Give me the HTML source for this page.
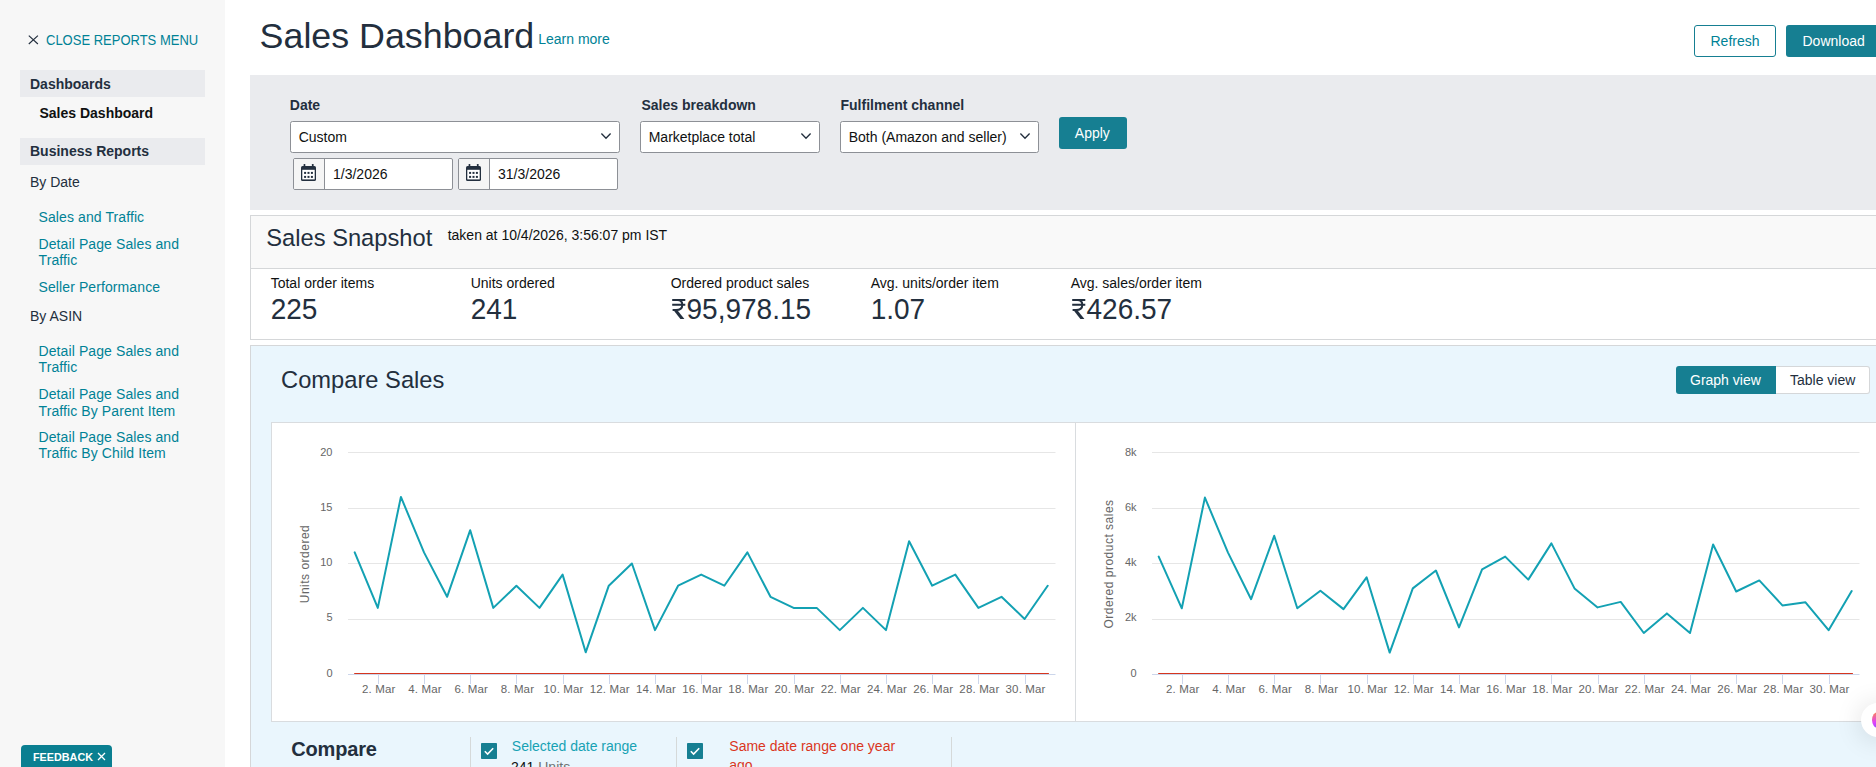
<!DOCTYPE html>
<html><head><meta charset="utf-8"><title>Sales Dashboard</title>
<style>
html,body{margin:0;padding:0;width:1876px;height:767px;overflow:hidden;background:#fff}
body{position:relative;font-family:"Liberation Sans",sans-serif}
.t{position:absolute;white-space:nowrap;line-height:1}
.r{position:absolute}
.cl{color:#666666}
</style></head><body>
<div class="r" style="left:0px;top:0px;width:225px;height:767px;background:#f7f7f7"></div>
<svg class="r" style="left:27.5px;top:35px" width="11" height="11" viewBox="0 0 11 11"><path d="M0.8 0.6L9.9 9M9.9 0.6L0.8 9" stroke="#232f3e" stroke-width="1.15"/></svg>
<div class="t" style="left:46.0px;top:34.00px;font-size:13px;color:#008296;transform:scaleY(1.08);transform-origin:0 11px;">CLOSE REPORTS MENU</div>
<div class="r" style="left:20px;top:70px;width:185px;height:27px;background:#eaebee"></div>
<div class="t" style="left:30.0px;top:77.15px;font-size:14px;color:#232f3e;font-weight:bold;">Dashboards</div>
<div class="t" style="left:39.5px;top:106.15px;font-size:14px;color:#0f1111;font-weight:bold;">Sales Dashboard</div>
<div class="r" style="left:20px;top:138px;width:185px;height:27px;background:#eaebee"></div>
<div class="t" style="left:30.0px;top:143.95px;font-size:14px;color:#232f3e;font-weight:bold;">Business Reports</div>
<div class="t" style="left:30.0px;top:175.15px;font-size:14px;color:#232f3e;">By Date</div>
<div class="t" style="left:38.5px;top:210.15px;font-size:14px;color:#008296;letter-spacing:0.1px;">Sales and Traffic</div>
<div class="t" style="left:38.5px;top:237.45px;font-size:14px;color:#008296;letter-spacing:0.1px;">Detail Page Sales and</div>
<div class="t" style="left:38.5px;top:253.15px;font-size:14px;color:#008296;letter-spacing:0.1px;">Traffic</div>
<div class="t" style="left:38.5px;top:280.15px;font-size:14px;color:#008296;letter-spacing:0.1px;">Seller Performance</div>
<div class="t" style="left:30.0px;top:309.15px;font-size:14px;color:#232f3e;">By ASIN</div>
<div class="t" style="left:38.5px;top:344.45px;font-size:14px;color:#008296;letter-spacing:0.1px;">Detail Page Sales and</div>
<div class="t" style="left:38.5px;top:360.15px;font-size:14px;color:#008296;letter-spacing:0.1px;">Traffic</div>
<div class="t" style="left:38.5px;top:387.45px;font-size:14px;color:#008296;letter-spacing:0.1px;">Detail Page Sales and</div>
<div class="t" style="left:38.5px;top:403.85px;font-size:14px;color:#008296;letter-spacing:0.1px;">Traffic By Parent Item</div>
<div class="t" style="left:38.5px;top:430.45px;font-size:14px;color:#008296;letter-spacing:0.1px;">Detail Page Sales and</div>
<div class="t" style="left:38.5px;top:446.15px;font-size:14px;color:#008296;letter-spacing:0.1px;">Traffic By Child Item</div>
<div class="r" style="left:21px;top:745px;width:91px;height:30px;background:#00838f;border-radius:4px 4px 0 0;background:#0a7f91"></div>
<div class="t" style="left:33.0px;top:751.86px;font-size:10.8px;color:#ffffff;font-weight:bold;">FEEDBACK</div>
<svg class="r" style="left:97px;top:752px" width="9" height="9" viewBox="0 0 9 9"><path d="M1 1L8 8M8 1L1 8" stroke="#fff" stroke-width="1.3"/></svg>
<div class="t" style="left:259.6px;top:18.70px;font-size:35.8px;color:#232f3e;">Sales Dashboard</div>
<div class="t" style="left:538.2px;top:32.15px;font-size:14px;color:#008296;">Learn more</div>
<div class="r" style="left:1694px;top:25px;width:82px;height:32px;border:1px solid #167f92;border-radius:3px;box-sizing:border-box;background:#fff"></div>
<div class="t" style="left:1710.5px;top:34.15px;font-size:14px;color:#008296;">Refresh</div>
<div class="r" style="left:1786px;top:25px;width:104px;height:32px;background:#167f92;border-radius:3px"></div>
<div class="t" style="left:1802.5px;top:34.15px;font-size:14px;color:#ffffff;">Download</div>
<div class="r" style="left:250px;top:75px;width:1626px;height:135px;background:#eaebee"></div>
<div class="t" style="left:289.8px;top:98.15px;font-size:14px;color:#232f3e;font-weight:bold;">Date</div>
<div class="t" style="left:641.5px;top:98.15px;font-size:14px;color:#232f3e;font-weight:bold;">Sales breakdown</div>
<div class="t" style="left:840.5px;top:98.15px;font-size:14px;color:#232f3e;font-weight:bold;">Fulfilment channel</div>
<div class="r" style="left:290px;top:121px;width:330px;height:32px;background:#fff;border:1px solid #8d9096;border-radius:2.5px;box-sizing:border-box"></div>
<div class="t" style="left:298.7px;top:130.15px;font-size:14px;color:#0f1111;">Custom</div>
<svg class="r" style="left:600px;top:131px" width="12" height="9" viewBox="0 0 12 9"><path d="M1.4 2.6L6 7.2L10.6 2.6" fill="none" stroke="#232f3e" stroke-width="1.35"/></svg>
<div class="r" style="left:640px;top:121px;width:180px;height:32px;background:#fff;border:1px solid #8d9096;border-radius:2.5px;box-sizing:border-box"></div>
<div class="t" style="left:648.7px;top:130.15px;font-size:14px;color:#0f1111;">Marketplace total</div>
<svg class="r" style="left:800px;top:131px" width="12" height="9" viewBox="0 0 12 9"><path d="M1.4 2.6L6 7.2L10.6 2.6" fill="none" stroke="#232f3e" stroke-width="1.35"/></svg>
<div class="r" style="left:840px;top:121px;width:199px;height:32px;background:#fff;border:1px solid #8d9096;border-radius:2.5px;box-sizing:border-box"></div>
<div class="t" style="left:848.7px;top:130.15px;font-size:14px;color:#0f1111;">Both (Amazon and seller)</div>
<svg class="r" style="left:1019px;top:131px" width="12" height="9" viewBox="0 0 12 9"><path d="M1.4 2.6L6 7.2L10.6 2.6" fill="none" stroke="#232f3e" stroke-width="1.35"/></svg>
<div class="r" style="left:293px;top:158px;width:160px;height:32px;background:#fff;border:1px solid #8d9096;border-radius:2px;box-sizing:border-box"></div>
<div class="r" style="left:294px;top:159px;width:30px;height:30px;background:#f5f5f5;border-right:1px solid #8d9096;border-radius:1px 0 0 1px"></div>
<svg class="r" style="left:301px;top:164px" width="16" height="17" viewBox="0 0 16 17"><rect x="0" y="2" width="15" height="15" rx="1.6" fill="#232f3e"/><rect x="1.3" y="5.8" width="12.4" height="9.6" fill="#fff"/><rect x="2.6" y="0" width="1.7" height="3" rx="0.5" fill="#232f3e"/><rect x="10.9" y="0" width="1.7" height="3" rx="0.5" fill="#232f3e"/><g fill="#232f3e"><rect x="3.1" y="7.9" width="2" height="2"/><rect x="6.5" y="7.9" width="2" height="2"/><rect x="9.9" y="7.9" width="2" height="2"/><rect x="3.1" y="11.9" width="2" height="2"/><rect x="6.5" y="11.9" width="2" height="2"/><rect x="9.9" y="11.9" width="2" height="2"/></g></svg>
<div class="t" style="left:333.0px;top:167.15px;font-size:14px;color:#0f1111;">1/3/2026</div>
<div class="r" style="left:458px;top:158px;width:160px;height:32px;background:#fff;border:1px solid #8d9096;border-radius:2px;box-sizing:border-box"></div>
<div class="r" style="left:459px;top:159px;width:30px;height:30px;background:#f5f5f5;border-right:1px solid #8d9096;border-radius:1px 0 0 1px"></div>
<svg class="r" style="left:466px;top:164px" width="16" height="17" viewBox="0 0 16 17"><rect x="0" y="2" width="15" height="15" rx="1.6" fill="#232f3e"/><rect x="1.3" y="5.8" width="12.4" height="9.6" fill="#fff"/><rect x="2.6" y="0" width="1.7" height="3" rx="0.5" fill="#232f3e"/><rect x="10.9" y="0" width="1.7" height="3" rx="0.5" fill="#232f3e"/><g fill="#232f3e"><rect x="3.1" y="7.9" width="2" height="2"/><rect x="6.5" y="7.9" width="2" height="2"/><rect x="9.9" y="7.9" width="2" height="2"/><rect x="3.1" y="11.9" width="2" height="2"/><rect x="6.5" y="11.9" width="2" height="2"/><rect x="9.9" y="11.9" width="2" height="2"/></g></svg>
<div class="t" style="left:498.0px;top:167.15px;font-size:14px;color:#0f1111;">31/3/2026</div>
<div class="r" style="left:1059px;top:117px;width:68px;height:32px;background:#167f92;border-radius:3px"></div>
<div class="t" style="left:1074.8px;top:126.35px;font-size:14px;color:#ffffff;">Apply</div>
<div class="r" style="left:250px;top:215px;width:1650px;height:125px;border:1px solid #d5d7d9;box-sizing:border-box;background:#fff"></div>
<div class="r" style="left:251px;top:216px;width:1649px;height:52px;background:#f9f9f9;border-bottom:1px solid #d5d7d9"></div>
<div class="t" style="left:266.3px;top:226.79px;font-size:23.7px;color:#232f3e;">Sales Snapshot</div>
<div class="t" style="left:447.7px;top:228.15px;font-size:14px;color:#0f1111;">taken at 10/4/2026, 3:56:07 pm IST</div>
<div class="t" style="left:270.7px;top:276.15px;font-size:14px;color:#0f1111;">Total order items</div>
<div class="t" style="left:270.7px;top:295.90px;font-size:28px;color:#232f3e;transform:scaleY(1.045);transform-origin:0 23.7px;">225</div>
<div class="t" style="left:470.7px;top:276.15px;font-size:14px;color:#0f1111;">Units ordered</div>
<div class="t" style="left:470.7px;top:295.90px;font-size:28px;color:#232f3e;transform:scaleY(1.045);transform-origin:0 23.7px;">241</div>
<div class="t" style="left:670.7px;top:276.15px;font-size:14px;color:#0f1111;">Ordered product sales</div>
<svg class="r" style="left:672px;top:299px" width="15" height="21" viewBox="0 0 15 21"><g fill="none" stroke="#232f3e" stroke-width="2"><path d="M0.2 1.05H13.3M0.2 5.85H13.3"/><path d="M5.5 1.05C9.3 1.05 10.3 3.3 10.3 5.9C10.3 9.2 7.8 10.95 4 10.95H0.6"/></g><path d="M0.8 10.3H4.6L12.4 19.9H8.4Z" fill="#232f3e"/></svg>
<div class="t" style="left:686.5px;top:295.90px;font-size:28px;color:#232f3e;transform:scaleY(1.045);transform-origin:0 23.7px;">95,978.15</div>
<div class="t" style="left:870.7px;top:276.15px;font-size:14px;color:#0f1111;">Avg. units/order item</div>
<div class="t" style="left:870.7px;top:295.90px;font-size:28px;color:#232f3e;transform:scaleY(1.045);transform-origin:0 23.7px;">1.07</div>
<div class="t" style="left:1070.7px;top:276.15px;font-size:14px;color:#0f1111;">Avg. sales/order item</div>
<svg class="r" style="left:1072px;top:299px" width="15" height="21" viewBox="0 0 15 21"><g fill="none" stroke="#232f3e" stroke-width="2"><path d="M0.2 1.05H13.3M0.2 5.85H13.3"/><path d="M5.5 1.05C9.3 1.05 10.3 3.3 10.3 5.9C10.3 9.2 7.8 10.95 4 10.95H0.6"/></g><path d="M0.8 10.3H4.6L12.4 19.9H8.4Z" fill="#232f3e"/></svg>
<div class="t" style="left:1086.5px;top:295.90px;font-size:28px;color:#232f3e;transform:scaleY(1.045);transform-origin:0 23.7px;">426.57</div>
<div class="r" style="left:250px;top:345px;width:1650px;height:422px;border:1px solid #d5d7d9;border-bottom:none;box-sizing:border-box;background:#eaf6fd"></div>
<div class="t" style="left:281.1px;top:368.94px;font-size:23.7px;color:#232f3e;">Compare Sales</div>
<div class="r" style="left:1676px;top:366px;width:100px;height:28px;background:#167f92;border-radius:3px 0 0 3px"></div>
<div class="t" style="left:1690.0px;top:372.65px;font-size:14px;color:#ffffff;">Graph view</div>
<div class="r" style="left:1776px;top:366px;width:94px;height:28px;background:#fff;border:1px solid #d5d7d9;border-left:none;border-radius:0 3px 3px 0;box-sizing:border-box"></div>
<div class="t" style="left:1790.0px;top:372.65px;font-size:14px;color:#232f3e;">Table view</div>
<div class="r" style="left:271px;top:422px;width:1629px;height:300px;background:#fff;border:1px solid #d9dcdf;box-sizing:border-box"></div>
<div class="r" style="left:1075px;top:422px;width:1px;height:300px;background:#d9dcdf"></div>
<svg class="r" style="left:0;top:0" width="1876" height="767"><path d="M348 452.5H1055.5" stroke="#e6e6e6" stroke-width="1"/><path d="M348 508.5H1055.5" stroke="#e6e6e6" stroke-width="1"/><path d="M348 563.5H1055.5" stroke="#e6e6e6" stroke-width="1"/><path d="M348 619.5H1055.5" stroke="#e6e6e6" stroke-width="1"/><path d="M354.2 674H1048.9" stroke="#d5361f" stroke-width="2"/><path d="M348 674.5H1055.5" stroke="#ccd6eb" stroke-width="1"/><path d="M378.5 674V684" stroke="#ccd6eb" stroke-width="1"/><path d="M424.5 674V684" stroke="#ccd6eb" stroke-width="1"/><path d="M470.5 674V684" stroke="#ccd6eb" stroke-width="1"/><path d="M516.5 674V684" stroke="#ccd6eb" stroke-width="1"/><path d="M563.5 674V684" stroke="#ccd6eb" stroke-width="1"/><path d="M609.5 674V684" stroke="#ccd6eb" stroke-width="1"/><path d="M655.5 674V684" stroke="#ccd6eb" stroke-width="1"/><path d="M701.5 674V684" stroke="#ccd6eb" stroke-width="1"/><path d="M747.5 674V684" stroke="#ccd6eb" stroke-width="1"/><path d="M794.5 674V684" stroke="#ccd6eb" stroke-width="1"/><path d="M840.5 674V684" stroke="#ccd6eb" stroke-width="1"/><path d="M886.5 674V684" stroke="#ccd6eb" stroke-width="1"/><path d="M932.5 674V684" stroke="#ccd6eb" stroke-width="1"/><path d="M978.5 674V684" stroke="#ccd6eb" stroke-width="1"/><path d="M1025.5 674V684" stroke="#ccd6eb" stroke-width="1"/><path d="M354.7 552.4 L377.8 607.9 L400.9 496.9 L424.0 552.4 L447.1 596.8 L470.2 530.2 L493.3 607.9 L516.4 585.7 L539.5 607.9 L562.6 574.6 L585.7 652.3 L608.8 585.7 L631.9 563.5 L655.0 630.1 L678.1 585.7 L701.2 574.6 L724.3 585.7 L747.4 552.4 L770.5 596.8 L793.6 607.9 L816.7 607.9 L839.8 630.1 L862.9 607.9 L886.0 630.1 L909.1 541.3 L932.2 585.7 L955.3 574.6 L978.4 607.9 L1001.5 596.8 L1024.6 619.0 L1047.7 585.7" fill="none" stroke="#13a1b3" stroke-width="2" stroke-linejoin="round" stroke-linecap="round"/></svg>
<div class="t cl" style="right:1543.5px;top:667.69px;font-size:11px;text-align:right">0</div>
<div class="t cl" style="right:1543.5px;top:612.44px;font-size:11px;text-align:right">5</div>
<div class="t cl" style="right:1543.5px;top:557.19px;font-size:11px;text-align:right">10</div>
<div class="t cl" style="right:1543.5px;top:501.94px;font-size:11px;text-align:right">15</div>
<div class="t cl" style="right:1543.5px;top:446.69px;font-size:11px;text-align:right">20</div>
<div class="t cl" style="left:378.8px;top:683.6px;font-size:11.5px;width:60px;margin-left:-30px;text-align:center;letter-spacing:0.15px">2. Mar</div>
<div class="t cl" style="left:425.0px;top:683.6px;font-size:11.5px;width:60px;margin-left:-30px;text-align:center;letter-spacing:0.15px">4. Mar</div>
<div class="t cl" style="left:471.2px;top:683.6px;font-size:11.5px;width:60px;margin-left:-30px;text-align:center;letter-spacing:0.15px">6. Mar</div>
<div class="t cl" style="left:517.4px;top:683.6px;font-size:11.5px;width:60px;margin-left:-30px;text-align:center;letter-spacing:0.15px">8. Mar</div>
<div class="t cl" style="left:563.6px;top:683.6px;font-size:11.5px;width:60px;margin-left:-30px;text-align:center;letter-spacing:0.15px">10. Mar</div>
<div class="t cl" style="left:609.8px;top:683.6px;font-size:11.5px;width:60px;margin-left:-30px;text-align:center;letter-spacing:0.15px">12. Mar</div>
<div class="t cl" style="left:656.0px;top:683.6px;font-size:11.5px;width:60px;margin-left:-30px;text-align:center;letter-spacing:0.15px">14. Mar</div>
<div class="t cl" style="left:702.2px;top:683.6px;font-size:11.5px;width:60px;margin-left:-30px;text-align:center;letter-spacing:0.15px">16. Mar</div>
<div class="t cl" style="left:748.4px;top:683.6px;font-size:11.5px;width:60px;margin-left:-30px;text-align:center;letter-spacing:0.15px">18. Mar</div>
<div class="t cl" style="left:794.6px;top:683.6px;font-size:11.5px;width:60px;margin-left:-30px;text-align:center;letter-spacing:0.15px">20. Mar</div>
<div class="t cl" style="left:840.8px;top:683.6px;font-size:11.5px;width:60px;margin-left:-30px;text-align:center;letter-spacing:0.15px">22. Mar</div>
<div class="t cl" style="left:887.0px;top:683.6px;font-size:11.5px;width:60px;margin-left:-30px;text-align:center;letter-spacing:0.15px">24. Mar</div>
<div class="t cl" style="left:933.2px;top:683.6px;font-size:11.5px;width:60px;margin-left:-30px;text-align:center;letter-spacing:0.15px">26. Mar</div>
<div class="t cl" style="left:979.4px;top:683.6px;font-size:11.5px;width:60px;margin-left:-30px;text-align:center;letter-spacing:0.15px">28. Mar</div>
<div class="t cl" style="left:1025.6px;top:683.6px;font-size:11.5px;width:60px;margin-left:-30px;text-align:center;letter-spacing:0.15px">30. Mar</div>
<div class="t cl" style="left:304.5px;top:563.5px;font-size:12px;transform:translate(-50%,-50%) rotate(-90deg);letter-spacing:0.5px">Units ordered</div>
<svg class="r" style="left:0;top:0" width="1876" height="767"><path d="M1152 452.5H1859.5" stroke="#e6e6e6" stroke-width="1"/><path d="M1152 508.5H1859.5" stroke="#e6e6e6" stroke-width="1"/><path d="M1152 563.5H1859.5" stroke="#e6e6e6" stroke-width="1"/><path d="M1152 619.5H1859.5" stroke="#e6e6e6" stroke-width="1"/><path d="M1158.2 674H1852.9" stroke="#d5361f" stroke-width="2"/><path d="M1152 674.5H1859.5" stroke="#ccd6eb" stroke-width="1"/><path d="M1182.5 674V684" stroke="#ccd6eb" stroke-width="1"/><path d="M1228.5 674V684" stroke="#ccd6eb" stroke-width="1"/><path d="M1274.5 674V684" stroke="#ccd6eb" stroke-width="1"/><path d="M1320.5 674V684" stroke="#ccd6eb" stroke-width="1"/><path d="M1367.5 674V684" stroke="#ccd6eb" stroke-width="1"/><path d="M1413.5 674V684" stroke="#ccd6eb" stroke-width="1"/><path d="M1459.5 674V684" stroke="#ccd6eb" stroke-width="1"/><path d="M1505.5 674V684" stroke="#ccd6eb" stroke-width="1"/><path d="M1551.5 674V684" stroke="#ccd6eb" stroke-width="1"/><path d="M1598.5 674V684" stroke="#ccd6eb" stroke-width="1"/><path d="M1644.5 674V684" stroke="#ccd6eb" stroke-width="1"/><path d="M1690.5 674V684" stroke="#ccd6eb" stroke-width="1"/><path d="M1736.5 674V684" stroke="#ccd6eb" stroke-width="1"/><path d="M1782.5 674V684" stroke="#ccd6eb" stroke-width="1"/><path d="M1829.5 674V684" stroke="#ccd6eb" stroke-width="1"/><path d="M1158.7 556.6 L1181.8 608.3 L1204.9 497.6 L1228.0 552.6 L1251.1 599.2 L1274.2 535.8 L1297.3 608.3 L1320.4 590.8 L1343.5 609.1 L1366.6 577.3 L1389.7 652.6 L1412.8 588.4 L1435.9 570.5 L1459.0 627.4 L1482.1 569.3 L1505.2 556.6 L1528.3 579.6 L1551.4 543.4 L1574.5 588.4 L1597.6 607.4 L1620.7 601.9 L1643.8 633.0 L1666.9 613.4 L1690.0 633.0 L1713.1 544.5 L1736.2 591.5 L1759.3 580.4 L1782.4 605.4 L1805.5 602.3 L1828.6 630.2 L1851.7 591.1" fill="none" stroke="#13a1b3" stroke-width="2" stroke-linejoin="round" stroke-linecap="round"/></svg>
<div class="t cl" style="right:739.5px;top:667.69px;font-size:11px;text-align:right">0</div>
<div class="t cl" style="right:739.5px;top:612.44px;font-size:11px;text-align:right">2k</div>
<div class="t cl" style="right:739.5px;top:557.19px;font-size:11px;text-align:right">4k</div>
<div class="t cl" style="right:739.5px;top:501.94px;font-size:11px;text-align:right">6k</div>
<div class="t cl" style="right:739.5px;top:446.69px;font-size:11px;text-align:right">8k</div>
<div class="t cl" style="left:1182.8px;top:683.6px;font-size:11.5px;width:60px;margin-left:-30px;text-align:center;letter-spacing:0.15px">2. Mar</div>
<div class="t cl" style="left:1229.0px;top:683.6px;font-size:11.5px;width:60px;margin-left:-30px;text-align:center;letter-spacing:0.15px">4. Mar</div>
<div class="t cl" style="left:1275.2px;top:683.6px;font-size:11.5px;width:60px;margin-left:-30px;text-align:center;letter-spacing:0.15px">6. Mar</div>
<div class="t cl" style="left:1321.4px;top:683.6px;font-size:11.5px;width:60px;margin-left:-30px;text-align:center;letter-spacing:0.15px">8. Mar</div>
<div class="t cl" style="left:1367.6px;top:683.6px;font-size:11.5px;width:60px;margin-left:-30px;text-align:center;letter-spacing:0.15px">10. Mar</div>
<div class="t cl" style="left:1413.8px;top:683.6px;font-size:11.5px;width:60px;margin-left:-30px;text-align:center;letter-spacing:0.15px">12. Mar</div>
<div class="t cl" style="left:1460.0px;top:683.6px;font-size:11.5px;width:60px;margin-left:-30px;text-align:center;letter-spacing:0.15px">14. Mar</div>
<div class="t cl" style="left:1506.2px;top:683.6px;font-size:11.5px;width:60px;margin-left:-30px;text-align:center;letter-spacing:0.15px">16. Mar</div>
<div class="t cl" style="left:1552.4px;top:683.6px;font-size:11.5px;width:60px;margin-left:-30px;text-align:center;letter-spacing:0.15px">18. Mar</div>
<div class="t cl" style="left:1598.6px;top:683.6px;font-size:11.5px;width:60px;margin-left:-30px;text-align:center;letter-spacing:0.15px">20. Mar</div>
<div class="t cl" style="left:1644.8px;top:683.6px;font-size:11.5px;width:60px;margin-left:-30px;text-align:center;letter-spacing:0.15px">22. Mar</div>
<div class="t cl" style="left:1691.0px;top:683.6px;font-size:11.5px;width:60px;margin-left:-30px;text-align:center;letter-spacing:0.15px">24. Mar</div>
<div class="t cl" style="left:1737.2px;top:683.6px;font-size:11.5px;width:60px;margin-left:-30px;text-align:center;letter-spacing:0.15px">26. Mar</div>
<div class="t cl" style="left:1783.4px;top:683.6px;font-size:11.5px;width:60px;margin-left:-30px;text-align:center;letter-spacing:0.15px">28. Mar</div>
<div class="t cl" style="left:1829.6px;top:683.6px;font-size:11.5px;width:60px;margin-left:-30px;text-align:center;letter-spacing:0.15px">30. Mar</div>
<div class="t cl" style="left:1108.5px;top:563.5px;font-size:12px;transform:translate(-50%,-50%) rotate(-90deg);letter-spacing:0.5px">Ordered product sales</div>
<div class="t" style="left:291.2px;top:738.67px;font-size:20px;color:#232f3e;font-weight:bold;letter-spacing:-0.15px;">Compare</div>
<div class="r" style="left:470px;top:737px;width:1px;height:30px;background:#d5d9d9"></div>
<div class="r" style="left:676px;top:737px;width:1px;height:30px;background:#d5d9d9"></div>
<div class="r" style="left:951px;top:737px;width:1px;height:30px;background:#d5d9d9"></div>
<svg class="r" style="left:481px;top:743px" width="16" height="16" viewBox="0 0 16 16"><rect width="16" height="16" rx="0.8" fill="#167f92"/><path d="M3.8 8.2L6.6 11L12.2 5.2" fill="none" stroke="#fff" stroke-width="1.6"/></svg>
<svg class="r" style="left:687px;top:743px" width="16" height="16" viewBox="0 0 16 16"><rect width="16" height="16" rx="0.8" fill="#167f92"/><path d="M3.8 8.2L6.6 11L12.2 5.2" fill="none" stroke="#fff" stroke-width="1.6"/></svg>
<div class="t" style="left:511.8px;top:738.95px;font-size:14px;color:#17a2b4;">Selected date range</div>
<div class="t" style="left:511.0px;top:759.65px;font-size:14px;color:#0f1111;">241 <span style="color:#6f7373">Units</span></div>
<div class="t" style="left:729.3px;top:738.95px;font-size:14px;color:#da361e;">Same date range one year</div>
<div class="t" style="left:729.3px;top:758.45px;font-size:14px;color:#da361e;">ago</div>
<div class="r" style="left:1861px;top:703px;width:34px;height:34px;border-radius:50%;background:#fff;box-shadow:0 2px 28px rgba(0,0,0,0.14)"></div>
<div class="r" style="left:1872px;top:712px;width:12px;height:16px;border-radius:50%;background:linear-gradient(160deg,#ff8a3d,#e040fb 55%,#7c4dff)"></div>
</body></html>
